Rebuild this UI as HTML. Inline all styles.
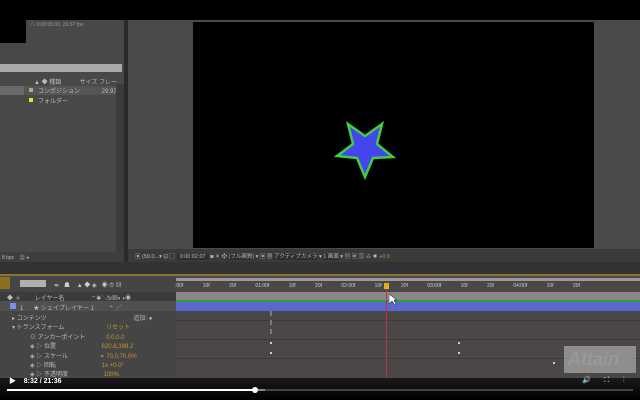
<!DOCTYPE html>
<html><head><meta charset="utf-8"><style>
*{margin:0;padding:0;box-sizing:border-box}
body{width:640px;height:400px;background:#000;position:relative;overflow:hidden;font-family:"Liberation Sans","Noto Sans CJK JP",sans-serif;color:#bbb}
.a{position:absolute}
.t{font-size:6px;white-space:nowrap}
.o{color:#c9952a}
</style></head><body>
<!-- left panel -->
<div class="a" style="left:0;top:20px;width:124px;height:242px;background:#484848"></div>
<div class="a" style="left:0;top:0;width:26px;height:43px;background:#000"></div>
<div class="a t" style="left:30px;top:21px;color:#999;font-size:5px">△ 0:00:05:00, 29.97 fps</div>
<div class="a" style="left:0;top:64px;width:122px;height:8px;background:#a9a9a9"></div>
<div class="a t" style="left:34px;top:77px">▲ ◆ 種類 &nbsp;&nbsp;&nbsp;&nbsp;&nbsp;&nbsp;&nbsp;&nbsp;&nbsp; サイズ フレー</div>
<div class="a" style="left:0;top:86px;width:24px;height:9px;background:#6a6a6a"></div>
<div class="a" style="left:24px;top:86px;width:92px;height:9px;background:#555"></div>
<div class="a" style="left:29px;top:88px;width:4px;height:4px;background:#b8a880"></div>
<div class="a t" style="left:38px;top:86px">コンポジション &nbsp;&nbsp;&nbsp;&nbsp;&nbsp;&nbsp;&nbsp;&nbsp;&nbsp;&nbsp;&nbsp; 29.97</div>
<div class="a" style="left:29px;top:98px;width:4px;height:4px;background:#e8e040"></div>
<div class="a t" style="left:38px;top:96px">フォルダー</div>
<div class="a" style="left:116px;top:84px;width:8px;height:170px;background:#3c3c3c"></div>
<div class="a" style="left:0;top:252px;width:124px;height:10px;background:#3e3e3e"></div>
<div class="a t" style="left:2px;top:254px;font-size:5px">8 bpc &nbsp;&nbsp; ▦ ◂</div>
<div class="a" style="left:124px;top:20px;width:4px;height:242px;background:#2a2a2a"></div>
<!-- comp panel -->
<div class="a" style="left:128px;top:20px;width:512px;height:242px;background:#4a4a4a"></div>
<div class="a" style="left:193px;top:22px;width:401px;height:226px;background:#000"></div>
<svg class="a" style="left:0;top:0" width="640" height="400">
<polygon points="348,124 365,136 382,124 377,144 393,157 373,158 365,177 357,158 337,156 353,144" fill="#4545f0" stroke="#3fcf3f" stroke-width="2.5" stroke-linejoin="miter"/>
</svg>
<div class="a" style="left:128px;top:249px;width:512px;height:13px;background:#3a3a3a"></div>
<div class="a t" style="left:135px;top:252px;font-size:5.5px">▣ (50.0...▾ ⊡ ▢ <span style="background:#2e2e2e;padding:0 3px">0:00:02:07</span> ◙ ⚘ ❖ <span style="background:#2e2e2e">(フル画質)</span> ▾ ▣ ▦ <span style="background:#2e2e2e">アクティブカメラ</span> ▾ <span style="background:#2e2e2e">1 画面</span> ▾ ▤ ▣ ▥ ⁂ ✸ <span class="o">+0.0</span></div>
<!-- band -->
<div class="a" style="left:0;top:262px;width:640px;height:13px;background:#323232"></div>
<div class="a" style="left:0;top:274px;width:640px;height:2px;background:#8a7430"></div>
<!-- timeline left -->
<div class="a" style="left:0;top:276px;width:176px;height:104px;background:#454545"></div>
<div class="a" style="left:0;top:277px;width:10px;height:12px;background:#8a7020"></div>
<div class="a" style="left:20px;top:280px;width:26px;height:7px;background:#b0b0b0"></div>
<div class="a t" style="left:54px;top:280px;color:#ccc">⇹ &nbsp;&nbsp;☗ &nbsp;&nbsp;&nbsp;▲ ◆ ◈ &nbsp;&nbsp;◉ ⏱ ▤</div>
<div class="a" style="left:0;top:292px;width:176px;height:9px;background:#3b3b3b"></div>
<div class="a t" style="left:7px;top:293px">◆ &nbsp;# &nbsp;&nbsp;&nbsp;&nbsp;&nbsp;&nbsp;&nbsp; レイヤー名 &nbsp;&nbsp;&nbsp;&nbsp;&nbsp;&nbsp;&nbsp;&nbsp;&nbsp;&nbsp;&nbsp;&nbsp;&nbsp;&nbsp; ⌃✱╲fx▦◐◑◉</div>
<div class="a" style="left:0;top:301px;width:176px;height:10px;background:#505050"></div>
<div class="a" style="left:10px;top:303px;width:6px;height:6px;background:#8090e0"></div>
<div class="a t" style="left:20px;top:303px">1 &nbsp;&nbsp;&nbsp;&nbsp;&nbsp;★ シェイプレイヤー 1 &nbsp;&nbsp;&nbsp;&nbsp;&nbsp;&nbsp;&nbsp; ⌃ ╱</div>
<div class="a t" style="left:12px;top:313px">▸ コンテンツ <span style="margin-left:85px">追加: ●</span></div>
<div class="a t" style="left:12px;top:322px">▾ トランスフォーム <span class="o" style="margin-left:40px">リセット</span></div>
<div class="a t" style="left:30px;top:332px">⊙ アンカーポイント <span class="o" style="margin-left:19px">0.0,0.0</span></div>
<div class="a t" style="left:30px;top:341px">◈ ▷ 位置 <span class="o" style="margin-left:44px">620.8,388.2</span></div>
<div class="a t" style="left:30px;top:351px">◈ ▷ スケール <span class="o" style="margin-left:30px">⚭ 70.0,70.0%</span></div>
<div class="a t" style="left:30px;top:360px">◈ ▷ 回転 <span class="o" style="margin-left:44px">1x +0.0°</span></div>
<div class="a t" style="left:30px;top:369px">◈ ▷ 不透明度 <span class="o" style="margin-left:34px">100%</span></div>
<!-- timeline right -->
<div class="a" style="left:176px;top:276px;width:464px;height:104px;background:#4b4747"></div>
<div class="a" style="left:176px;top:278px;width:464px;height:3px;background:#9a9a9a"></div>
<div class="a t" style="left:175px;top:283px;font-size:5px;color:#ccc;word-spacing:18px">:00f 10f 20f 01:00f 10f 20f 02:00f 10f 20f 03:00f 10f 20f 04:00f 10f 20f</div>
<div class="a" style="left:176px;top:292px;width:464px;height:8px;background:#888"></div>
<div class="a" style="left:176px;top:300px;width:464px;height:2px;background:#2fa030"></div>
<div class="a" style="left:176px;top:302px;width:464px;height:9px;background:#5868cc"></div>
<div class="a" style="left:176px;top:320px;width:464px;height:1px;background:#3e3a3a"></div>
<div class="a" style="left:176px;top:339px;width:464px;height:1px;background:#3e3a3a"></div>
<div class="a" style="left:176px;top:358px;width:464px;height:1px;background:#3e3a3a"></div>
<div class="a" style="left:386px;top:284px;width:1px;height:96px;background:#c03040"></div>
<div class="a" style="left:384px;top:283px;width:5px;height:6px;background:#e0b020"></div>
<div class="a t" style="left:270px;top:311px;font-size:7px;color:#ddd">I</div>
<div class="a t" style="left:270px;top:320px;font-size:7px;color:#ddd">I</div>
<div class="a t" style="left:270px;top:329px;font-size:7px;color:#ddd">I</div>
<div class="a" style="left:270px;top:342px;width:2px;height:2px;background:#ccc"></div>
<div class="a" style="left:270px;top:352px;width:2px;height:2px;background:#ccc"></div>
<div class="a" style="left:458px;top:342px;width:2px;height:2px;background:#ccc"></div>
<div class="a" style="left:458px;top:352px;width:2px;height:2px;background:#ccc"></div>
<div class="a" style="left:553px;top:362px;width:2px;height:2px;background:#ccc"></div>
<div class="a" style="left:564px;top:346px;width:72px;height:27px;background:rgba(200,200,200,.55);color:#999;font-size:18px;font-weight:bold;font-style:italic;padding:3px 0 0 4px">Attain</div>
<!-- cursor -->
<svg class="a" style="left:389px;top:294px" width="8" height="12"><polygon points="0,0 0,10 3,7 6,11 7,10 5,6 8,6" fill="#fff" stroke="#000" stroke-width=".5"/></svg>
<!-- video controls -->
<div class="a" style="left:0;top:378px;width:640px;height:22px;background:linear-gradient(#1a1a1a,#000)"></div>
<div class="a t" style="left:9px;top:376px;font-size:7px;color:#fff">▶ &nbsp;&nbsp; <b>8:32 / 21:36</b></div>
<div class="a t" style="left:582px;top:376px;font-size:7px;color:#fff">🔊 &nbsp;&nbsp;&nbsp;&nbsp;&nbsp; ⛶ &nbsp;&nbsp;&nbsp;&nbsp;&nbsp; ⋮</div>
<div class="a" style="left:7px;top:389px;width:626px;height:2px;background:#444"></div>
<div class="a" style="left:7px;top:389px;width:258px;height:2px;background:#888"></div>
<div class="a" style="left:7px;top:389px;width:248px;height:2px;background:#fff"></div>
<div class="a" style="left:252px;top:387px;width:6px;height:6px;border-radius:3px;background:#fff"></div>
</body></html>
